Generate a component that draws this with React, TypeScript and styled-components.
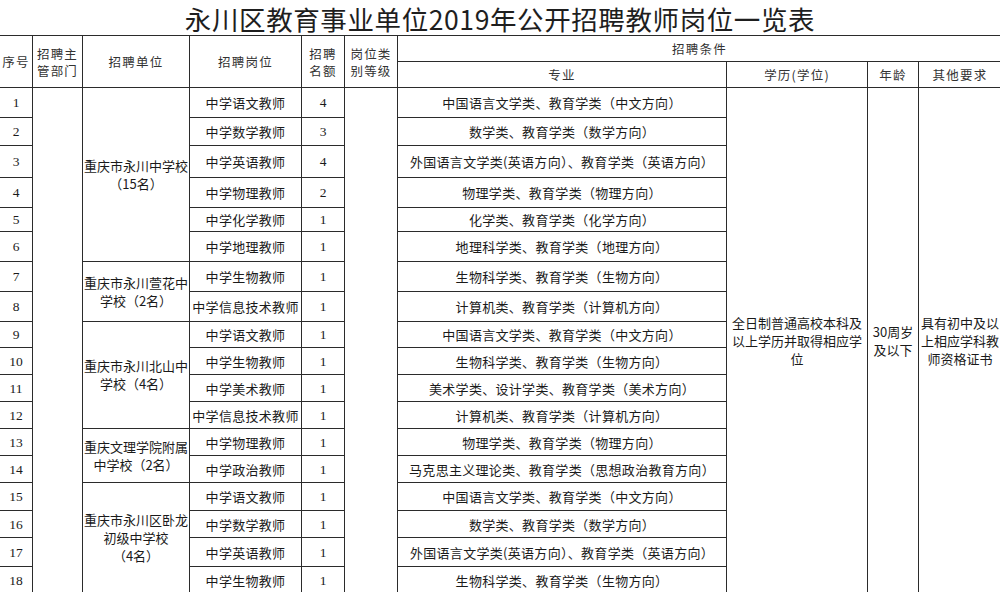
import React from "react";
import styled, { createGlobalStyle } from "styled-components";

const GlobalStyle = createGlobalStyle`
    html, body {
        margin: 0;
        padding: 0;
        background: #fff;
        overflow: hidden;
    }
    body {
        font-family: "Noto Sans CJK SC", "Noto Sans", sans-serif;
        color: #1a1a1a;
    }
`;

const Page = styled.main`
    width: 1000px;
    height: 592px;
    overflow: hidden;
    background: #fff;
`;

const Titulo = styled.h1`
    margin: 0;
    height: 35px;
    display: flex;
    align-items: center;
    justify-content: center;
    font-size: 26.5px;
    font-weight: 400;
    letter-spacing: 0.6px;
    color: #1e1e1e;
    line-height: 1;
    padding-top: 3px;
    box-sizing: border-box;
`;

const Tabela = styled.table`
    margin-left: -1px;
    width: 1002px;
    table-layout: fixed;
    border-collapse: collapse;
    font-size: 13px;
    line-height: 17px;
    th, td {
        border: 1px solid #2b2b2b;
        padding: 0;
        text-align: center;
        vertical-align: middle;
        overflow: hidden;
        white-space: nowrap;
    }
`;

const Cabeca = styled.th`
    font-weight: 400;
    font-size: 12.5px;
    letter-spacing: 1.2px;
    color: #333;
    line-height: 17px;
`;

const Linha = styled.tr<{ $h: number }>`
    height: ${(p) => p.$h}px;
`;

const Numero = styled.td`
    font-family: "Liberation Serif", "DejaVu Serif", serif;
    font-size: 13.5px;
`;

const Texto = styled.td`
    font-size: 13px;
    letter-spacing: 0.3px;
`;

const Bloco = styled.td`
    font-size: 13px;
    line-height: 18px;
`;

type Vaga = { cargo: string; qtd: number; area: string; h: number };

const vagas: Vaga[] = [
    { cargo: "中学语文教师", qtd: 4, area: "中国语言文学类、教育学类（中文方向）", h: 30 },
    { cargo: "中学数学教师", qtd: 3, area: "数学类、教育学类（数学方向）", h: 28 },
    { cargo: "中学英语教师", qtd: 4, area: "外国语言文学类(英语方向）、教育学类（英语方向）", h: 32 },
    { cargo: "中学物理教师", qtd: 2, area: "物理学类、教育学类（物理方向）", h: 30 },
    { cargo: "中学化学教师", qtd: 1, area: "化学类、教育学类（化学方向）", h: 24 },
    { cargo: "中学地理教师", qtd: 1, area: "地理科学类、教育学类（地理方向）", h: 30 },
    { cargo: "中学生物教师", qtd: 1, area: "生物科学类、教育学类（生物方向）", h: 30 },
    { cargo: "中学信息技术教师", qtd: 1, area: "计算机类、教育学类（计算机方向）", h: 30 },
    { cargo: "中学语文教师", qtd: 1, area: "中国语言文学类、教育学类（中文方向）", h: 26 },
    { cargo: "中学生物教师", qtd: 1, area: "生物科学类、教育学类（生物方向）", h: 27 },
    { cargo: "中学美术教师", qtd: 1, area: "美术学类、设计学类、教育学类（美术方向）", h: 27 },
    { cargo: "中学信息技术教师", qtd: 1, area: "计算机类、教育学类（计算机方向）", h: 27 },
    { cargo: "中学物理教师", qtd: 1, area: "物理学类、教育学类（物理方向）", h: 27 },
    { cargo: "中学政治教师", qtd: 1, area: "马克思主义理论类、教育学类（思想政治教育方向）", h: 27 },
    { cargo: "中学语文教师", qtd: 1, area: "中国语言文学类、教育学类（中文方向）", h: 28 },
    { cargo: "中学数学教师", qtd: 1, area: "数学类、教育学类（数学方向）", h: 27 },
    { cargo: "中学英语教师", qtd: 1, area: "外国语言文学类(英语方向）、教育学类（英语方向）", h: 29 },
    { cargo: "中学生物教师", qtd: 1, area: "生物科学类、教育学类（生物方向）", h: 27 },
];

// escola -> linha inicial e quantas linhas ocupa
const escolas: { inicio: number; span: number; nome: string[] }[] = [
    { inicio: 0, span: 6, nome: ["重庆市永川中学校", "（15名）"] },
    { inicio: 6, span: 2, nome: ["重庆市永川萱花中", "学校（2名）"] },
    { inicio: 8, span: 4, nome: ["重庆市永川北山中", "学校（4名）"] },
    { inicio: 12, span: 2, nome: ["重庆文理学院附属", "中学校（2名）"] },
    { inicio: 14, span: 4, nome: ["重庆市永川区卧龙", "初级中学校", "（4名）"] },
];

const Linhas = (partes: string[]) =>
    partes.map((p, i) => (
        <React.Fragment key={i}>
            {i > 0 && <br />}
            {p}
        </React.Fragment>
    ));

const App = () => {
    const total = vagas.length;
    return (
        <>
            <GlobalStyle />
            <Page>
                <Titulo>永川区教育事业单位2019年公开招聘教师岗位一览表</Titulo>
                <Tabela>
                    <colgroup>
                        <col style={{ width: 33 }} />
                        <col style={{ width: 50 }} />
                        <col style={{ width: 107 }} />
                        <col style={{ width: 112 }} />
                        <col style={{ width: 43 }} />
                        <col style={{ width: 53 }} />
                        <col style={{ width: 329 }} />
                        <col style={{ width: 141 }} />
                        <col style={{ width: 51 }} />
                        <col style={{ width: 83 }} />
                    </colgroup>
                    <thead>
                        <Linha $h={26}>
                            <Cabeca rowSpan={2}>序号</Cabeca>
                            <Cabeca rowSpan={2}>招聘主<br />管部门</Cabeca>
                            <Cabeca rowSpan={2}>招聘单位</Cabeca>
                            <Cabeca rowSpan={2}>招聘岗位</Cabeca>
                            <Cabeca rowSpan={2}>招聘<br />名额</Cabeca>
                            <Cabeca rowSpan={2}>岗位类<br />别等级</Cabeca>
                            <Cabeca colSpan={4}>招聘条件</Cabeca>
                        </Linha>
                        <Linha $h={26}>
                            <Cabeca>专业</Cabeca>
                            <Cabeca>学历(学位)</Cabeca>
                            <Cabeca>年龄</Cabeca>
                            <Cabeca>其他要求</Cabeca>
                        </Linha>
                    </thead>
                    <tbody>
                        {vagas.map((v, i) => {
                            const escola = escolas.find((e) => e.inicio === i);
                            return (
                                <Linha $h={v.h} key={i}>
                                    <Numero>{i + 1}</Numero>
                                    {i === 0 && <Bloco rowSpan={total}></Bloco>}
                                    {escola && (
                                        <Bloco rowSpan={escola.span}>{Linhas(escola.nome)}</Bloco>
                                    )}
                                    <Texto>{v.cargo}</Texto>
                                    <Numero>{v.qtd}</Numero>
                                    {i === 0 && <Bloco rowSpan={total}></Bloco>}
                                    <Texto>{v.area}</Texto>
                                    {i === 0 && (
                                        <>
                                            <Bloco rowSpan={total}>
                                                {Linhas(["全日制普通高校本科及", "以上学历并取得相应学", "位"])}
                                            </Bloco>
                                            <Bloco rowSpan={total}>{Linhas(["30周岁", "及以下"])}</Bloco>
                                            <Bloco rowSpan={total}>
                                                {Linhas(["具有初中及以", "上相应学科教", "师资格证书"])}
                                            </Bloco>
                                        </>
                                    )}
                                </Linha>
                            );
                        })}
                    </tbody>
                </Tabela>
            </Page>
        </>
    );
};

export default App;
